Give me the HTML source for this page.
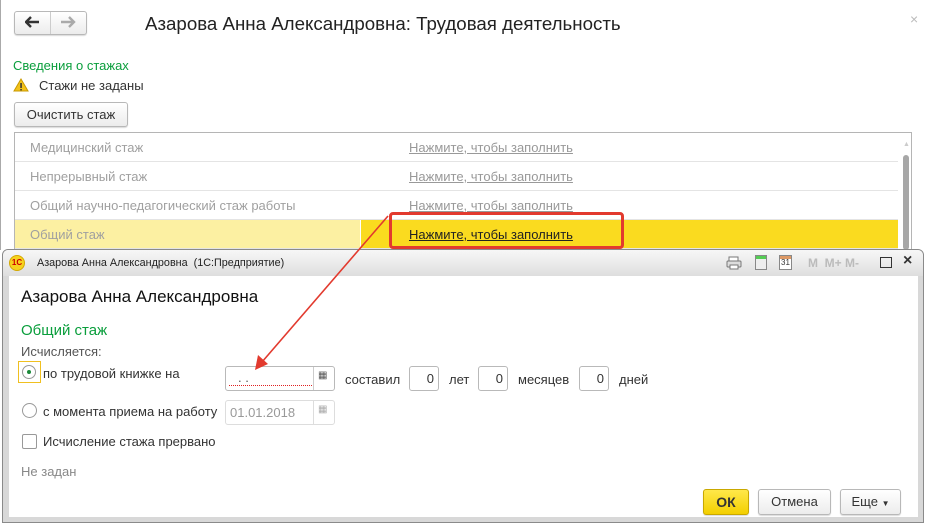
<!DOCTYPE html>
<html><head><meta charset="utf-8"><style>
*{margin:0;padding:0;box-sizing:border-box}
body{width:926px;height:525px;overflow:hidden;background:#fff;font-family:"Liberation Sans",Arial,sans-serif;position:relative;color:#333}
.a{position:absolute;white-space:nowrap}
.btn{position:absolute;border:1px solid #b8b8b8;border-radius:3px;background:linear-gradient(#fff,#ececec);box-shadow:0 1px 1px rgba(0,0,0,.15);font-size:13px;text-align:center;color:#333}
.row{position:absolute;left:15px;width:883px;height:29px;border-bottom:1px solid #e4e4e4;font-size:13px;color:#a0a0a0}
.row span{position:absolute;left:15px;top:7px}
.row u{position:absolute;left:394px;top:7px;color:#999}
.inp{position:absolute;border:1px solid #b9b9b9;border-radius:3px;background:#fff;font-size:13px}
</style></head><body>
<div class="a" style="left:0;top:0;width:1px;height:250px;background:#aaa"></div>
<div class="btn" style="left:14px;top:11px;width:73px;height:24px"></div>
<div class="a" style="left:50px;top:12px;width:1px;height:22px;background:#ccc"></div>
<svg class="a" style="left:25px;top:16px" width="16" height="12"><path d="M1 6 H14 M6 1 L1 6 L6 11" stroke="#333" stroke-width="2.4" fill="none"/></svg>
<svg class="a" style="left:60px;top:16px" width="16" height="12"><path d="M1 6 H14 M9 1 L14 6 L9 11" stroke="#aaa" stroke-width="2.4" fill="none"/></svg>
<div class="a" style="left:145px;top:13px;font-size:18.7px;color:#222">Азарова Анна Александровна: Трудовая деятельность</div>
<div class="a" style="left:910px;top:11px;font-size:14px;color:#bbb">×</div>
<div class="a" style="left:13px;top:58px;font-size:13px;color:#0a9e3c">Сведения о стажах</div>
<svg class="a" style="left:13px;top:78px" width="16" height="14"><path d="M8 1 L15 13 L1 13Z" fill="#f2c21b" stroke="#c99a00"/><rect x="7.3" y="5" width="1.5" height="5" fill="#333"/><rect x="7.3" y="11" width="1.5" height="1.4" fill="#333"/></svg>
<div class="a" style="left:39px;top:78px;font-size:13px">Стажи не заданы</div>
<div class="btn" style="left:14px;top:102px;width:114px;height:25px;line-height:23px">Очистить стаж</div>
<div class="a" style="left:14px;top:132px;width:898px;height:120px;border:1px solid #b5b5b5;border-bottom:none"></div>
<div class="row" style="top:133px"><span>Медицинский стаж</span><u>Нажмите, чтобы заполнить</u></div>
<div class="row" style="top:162px"><span>Непрерывный стаж</span><u>Нажмите, чтобы заполнить</u></div>
<div class="row" style="top:191px"><span>Общий научно-педагогический стаж работы</span><u>Нажмите, чтобы заполнить</u></div>
<div class="row" style="top:220px;background:linear-gradient(90deg,#fcf0a2 345px,#fff 345px,#fff 346px,#fadb1f 346px)"><span>Общий стаж</span><u style="color:#222">Нажмите, чтобы заполнить</u></div>
<div class="a" style="left:389px;top:212px;width:235px;height:37px;border:3px solid #e23a2e;border-radius:4px"></div>
<div class="a" style="left:903px;top:155px;width:6px;height:95px;background:#a7a7a7;border-radius:3px"></div>
<div class="a" style="left:903px;top:141px;font-size:7px;color:#ccc">▲</div>
<!-- dialog -->
<div class="a" style="left:2px;top:249px;width:922px;height:274px;border:1px solid #8a8a8a;border-radius:6px 6px 0 0;background:#d8d8d8"></div>
<div class="a" style="left:3px;top:250px;width:920px;height:26px;border-radius:5px 5px 0 0;background:linear-gradient(#f7f7f7,#dedede)"></div>
<div class="a" style="left:9px;top:255px;width:16px;height:16px;border-radius:50%;background:#f7d21f;border:1px solid #d4a900;font-size:8px;font-weight:bold;color:#c00;text-align:center;line-height:14px">1С</div>
<div class="a" style="left:37px;top:257px;font-size:10.8px;color:#222">Азарова Анна Александровна &nbsp;(1С:Предприятие)</div>
<svg class="a" style="left:726px;top:256px" width="16" height="14"><rect x="3" y="1" width="9" height="5" fill="#fff" stroke="#777"/><rect x="1" y="5" width="14" height="6" rx="1" fill="#ddd" stroke="#777"/><rect x="4" y="9" width="8" height="4" fill="#fff" stroke="#777"/></svg>
<div class="a" style="left:755px;top:255px;width:12px;height:15px;border:1px solid #888;background:linear-gradient(#5c5 3px,#eee 3px)"></div>
<div class="a" style="left:779px;top:255px;width:13px;height:15px;border:1px solid #888;background:linear-gradient(#d96 3px,#fff 3px);font-size:8px;text-align:center;line-height:14px;color:#333">31</div>
<div class="a" style="left:808px;top:256px;font-size:12px;font-weight:bold;color:#bbb">M &nbsp;M+ M-</div>
<div class="a" style="left:880px;top:257px;width:12px;height:11px;border:1.5px solid #333"></div>
<div class="a" style="left:903px;top:252px;font-size:16px;font-weight:bold;color:#333">×</div>
<div class="a" style="left:9px;top:276px;width:909px;height:241px;background:#fff"></div>
<div class="a" style="left:21px;top:287px;font-size:17px;color:#111">Азарова Анна Александровна</div>
<div class="a" style="left:21px;top:322px;font-size:15px;color:#0a9e3c">Общий стаж</div>
<div class="a" style="left:21px;top:344px;font-size:13px;color:#555">Исчисляется:</div>
<div class="a" style="left:18px;top:361px;width:23px;height:22px;border:1px solid #f0c020"></div>
<div class="a" style="left:22px;top:365px;width:14px;height:14px;border:1px solid #999;border-radius:50%"></div>
<div class="a" style="left:27px;top:370px;width:4px;height:4px;background:#1b8a3a;border-radius:50%"></div>
<div class="a" style="left:43px;top:366px;font-size:13px">по трудовой книжке на</div>
<div class="inp" style="left:225px;top:366px;width:110px;height:25px"><div class="a" style="left:87px;top:0;width:1px;height:23px;background:#ccc"></div><div class="a" style="left:3px;top:18px;width:83px;border-top:1px dotted #e02020"></div><div class="a" style="left:12px;top:3px;color:#555">. .</div><div class="a" style="left:92px;top:3px;font-size:10px;color:#555">▦</div></div>
<div class="a" style="left:345px;top:372px;font-size:13px">составил</div>
<div class="inp" style="left:409px;top:366px;width:30px;height:25px;text-align:right;padding:4px 4px">0</div>
<div class="a" style="left:449px;top:372px;font-size:13px">лет</div>
<div class="inp" style="left:478px;top:366px;width:30px;height:25px;text-align:right;padding:4px 4px">0</div>
<div class="a" style="left:518px;top:372px;font-size:13px">месяцев</div>
<div class="inp" style="left:579px;top:366px;width:30px;height:25px;text-align:right;padding:4px 4px">0</div>
<div class="a" style="left:619px;top:372px;font-size:13px">дней</div>
<div class="a" style="left:22px;top:403px;width:15px;height:15px;border:1px solid #999;border-radius:50%"></div>
<div class="a" style="left:43px;top:404px;font-size:13px">с момента приема на работу</div>
<div class="inp" style="left:225px;top:400px;width:110px;height:25px;border-color:#ddd;color:#999;padding:4px 4px">01.01.2018<div class="a" style="left:87px;top:0;width:1px;height:23px;background:#ddd"></div><div class="a" style="left:92px;top:3px;font-size:10px;color:#aaa">▦</div></div>
<div class="a" style="left:22px;top:434px;width:15px;height:15px;border:1px solid #999;border-radius:2px"></div>
<div class="a" style="left:43px;top:434px;font-size:13px">Исчисление стажа прервано</div>
<div class="a" style="left:21px;top:464px;font-size:13px;color:#888">Не задан</div>
<div class="btn" style="left:703px;top:489px;width:46px;height:26px;background:linear-gradient(#ffe84a,#f3cf00);border-color:#c9a800;font-weight:bold;line-height:24px;font-size:14px">ОК</div>
<div class="btn" style="left:758px;top:489px;width:73px;height:26px;line-height:24px">Отмена</div>
<div class="btn" style="left:840px;top:489px;width:61px;height:26px;line-height:24px">Еще <span style="font-size:8px">▼</span></div>
<svg class="a" style="left:0;top:0" width="926" height="525"><line x1="388" y1="216" x2="262" y2="362" stroke="#e23a2e" stroke-width="1.6"/><path d="M255 370 L258 355 L268 364Z" fill="#e23a2e"/></svg>
</body></html>
